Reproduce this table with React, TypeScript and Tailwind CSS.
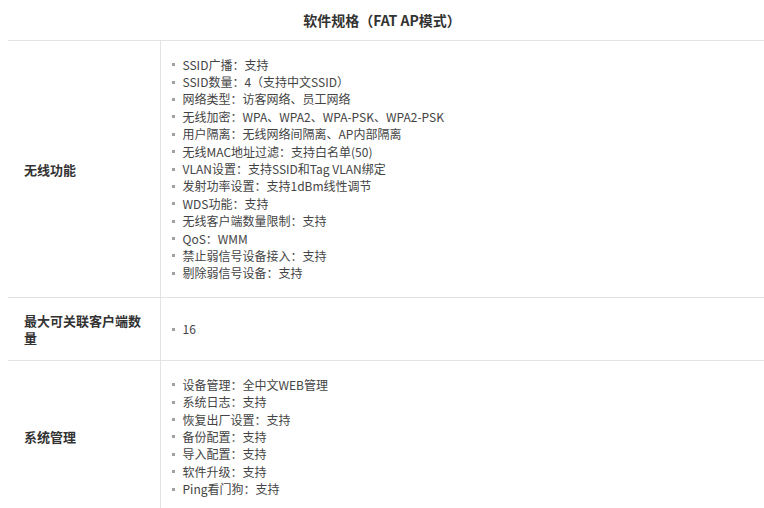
import React from 'react';

interface SpecRow {
  label: string;
  items: string[];
}

const rows: SpecRow[] = [
  {
    label: '无线功能',
    items: [
      'SSID广播：支持',
      'SSID数量：4（支持中文SSID）',
      '网络类型：访客网络、员工网络',
      '无线加密：WPA、WPA2、WPA-PSK、WPA2-PSK',
      '用户隔离：无线网络间隔离、AP内部隔离',
      '无线MAC地址过滤：支持白名单(50)',
      'VLAN设置：支持SSID和Tag VLAN绑定',
      '发射功率设置：支持1dBm线性调节',
      'WDS功能：支持',
      '无线客户端数量限制：支持',
      'QoS：WMM',
      '禁止弱信号设备接入：支持',
      '剔除弱信号设备：支持',
    ],
  },
  {
    label: '最大可关联客户端数量',
    items: ['16'],
  },
  {
    label: '系统管理',
    items: [
      '设备管理：全中文WEB管理',
      '系统日志：支持',
      '恢复出厂设置：支持',
      '备份配置：支持',
      '导入配置：支持',
      '软件升级：支持',
      'Ping看门狗：支持',
    ],
  },
];

const App: React.FC = () => {
  return (
    <div className="w-[764px] h-[508px] overflow-hidden bg-white text-[#333] font-['Noto_Sans_CJK_SC','Noto_Sans',sans-serif]">
      <div className="h-[40px] flex items-center justify-center">
        <h2 className="text-[14px] font-bold text-[#333] leading-none">软件规格（FAT AP模式）</h2>
      </div>
      <table className="ml-2 w-[756px] border-collapse">
        <tbody>
          {rows.map((row) => (
            <tr key={row.label} className="border-t border-[#e3e3e3]">
              <td className="w-[152px] px-4 py-[14px] align-middle text-[13px] leading-[17px] font-bold text-[#333] border-r border-[#e3e3e3]">
                {row.label}
              </td>
              <td className="pl-[11px] py-[15px] align-middle">
                <ul>
                  {row.items.map((item) => (
                    <li key={item} className="flex items-center h-[17.4px] text-[12px] text-[#444]">
                      <span className="w-[3px] h-[3px] bg-[#a0a0a0] mr-[8px] shrink-0"></span>
                      {item}
                    </li>
                  ))}
                </ul>
              </td>
            </tr>
          ))}
        </tbody>
      </table>
    </div>
  );
};

export default App;
